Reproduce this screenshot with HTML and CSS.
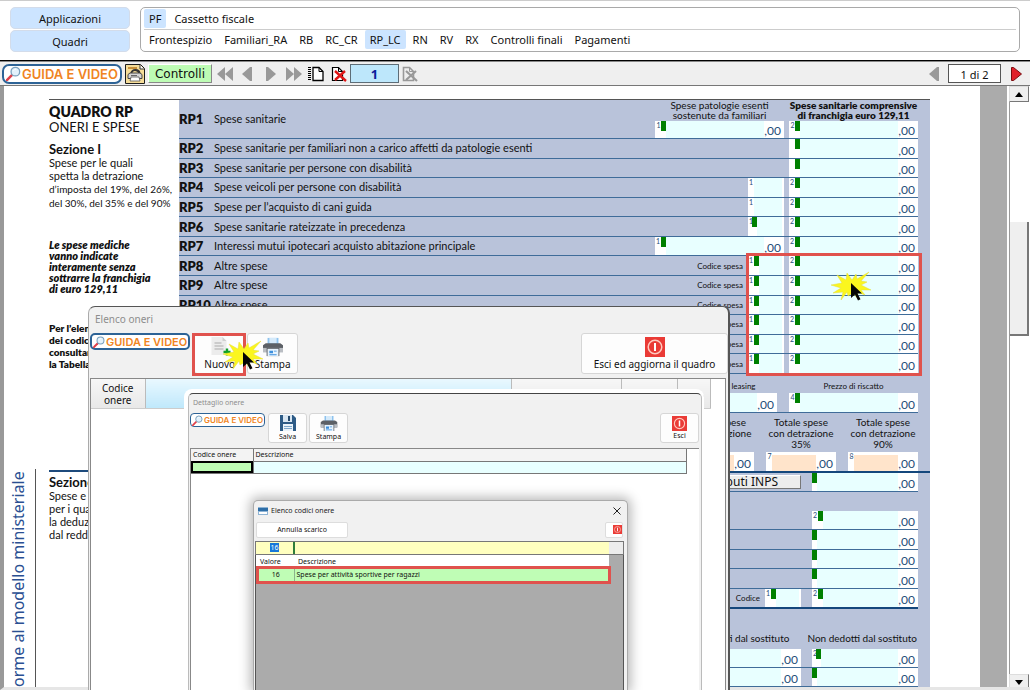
FILE: index.html
```html
<!DOCTYPE html>
<html lang="it">
<head>
<meta charset="utf-8">
<title>Quadro RP - Oneri e spese</title>
<link rel="stylesheet" href="styles.css">
</head>
<body>
<svg class="defs" aria-hidden="true">
  <symbol id="lens" viewBox="0 0 16 16"><path d="M1 15l5-5" stroke="#e0404a" stroke-width="2.6" stroke-linecap="round"/><circle cx="10" cy="6" r="4.6" fill="#e3f1fb" stroke="#7aa0bd" stroke-width="1.4"/><path d="M8 5q1-2 3-1.500" stroke="#fff" fill="none"/></symbol>
  <symbol id="printer" viewBox="0 0 24 22"><path d="M6 1h12v8H6z" fill="#8ec3ee"/><path d="M8 1h8v6H8z" fill="#d5eafa"/><path d="M1 9l3-2h16l3 2v7H1z" fill="#5c6066"/><path d="M1 12h22v5H1z" fill="#b9bdc3"/><path d="M5 12h14v9H5z" fill="#5c6066"/><path d="M6 13h12v8H6z" fill="#e6f3fd"/><path d="M8 15h4v3H8zM13 15h3v1h-3zM8 19h8v1H8z" fill="#3c8fdd"/></symbol>
  <symbol id="power" viewBox="0 0 20 20"><path d="M0 0h20v20H0z" fill="#ea3b36"/><circle cx="10" cy="10" r="6.800" fill="none" stroke="#ffc9bf" stroke-width="1.500"/><path d="M10 6v8" stroke="#fff" stroke-width="2"/></symbol>
  <symbol id="floppy" viewBox="0 0 18 18"><path d="M1 1h13l3 3v13H1z" fill="#2d5b86"/><path d="M4 1h9v7H4z" fill="#d8e6f2"/><path d="M9 2h2v5H9z" fill="#24496c"/><path d="M4 10h10v7H4z" fill="#eaf3fa"/><path d="M5 12h8v1H5zM5 14h8v1H5z" fill="#7da7cc"/></symbol>
  <symbol id="newdoc" viewBox="0 0 24 20"><path d="M4 0h11l4 4v14H4z" fill="#ececec"/><path d="M15 0l4 4h-4z" fill="#cfcfcf"/><path d="M7 6h7M7 9h9M7 12h9" stroke="#aaa"/><path d="M16 15h7M19.500 11.500v7" stroke="#11a02a" stroke-width="2.400"/></symbol>
  <symbol id="burst" viewBox="0 0 42 32"><path d="M21 9L25 3 26 8 38 1 30 10 36 11 30 14 40 19 30 19 34 24 26 21 28 29 22 22 17 25 16 21 10 29 12 21 2 22 10 17 0 14 11 12 6 4 15 9 16 2z" fill="#fbf61e" stroke="#e5dc3a" stroke-width=".5"/><path d="M20 12v15l4-3.500 3 6 2.500-1.200-3-5.800h4.500z" fill="#050505"/></symbol>
  <symbol id="sheet" viewBox="0 0 17 16"><path d="M6 1.500h6l4 4v9H6z" fill="#fff" stroke="#000" stroke-width="1.300"/><path d="M12 1.500v4h4" fill="none" stroke="#000"/><path d="M1 1.500h3M1 3.500h3M1 5.500h3M1 7.500h3M1 9.500h3M1 11.500h3M1 13.500h3" stroke="#000"/></symbol>
  <symbol id="sheetdel" viewBox="0 0 16 16"><path d="M1.500 1.500h6l4 4v9h-10z" fill="#fff" stroke="#000" stroke-width="1.200"/><path d="M7.500 1.500v4h4" fill="none" stroke="#000"/><path d="M4 5l11 10M14 5L4 14" stroke="#e01414" stroke-width="2.400"/></symbol>
  <symbol id="sheetoff" viewBox="0 0 16 16"><path d="M1.500 1.500h6l4 4v9h-10z" fill="#eee" stroke="#999" stroke-width="1.600"/><path d="M7.500 1.500v4h4" fill="none" stroke="#999"/><path d="M4 5l11 10M14 5L4 14" stroke="#999" stroke-width="2.200"/></symbol>
</svg>

<header class="top">
  <nav class="side">
    <button class="pill">Applicazioni</button>
    <button class="pill">Quadri</button>
  </nav>
  <nav class="tabs">
    <div class="tabrow"><a class="on" href="#">PF</a><a href="#">Cassetto fiscale</a></div>
    <div class="tabrow second"><a href="#">Frontespizio</a><a href="#">Familiari_RA</a><a href="#">RB</a><a href="#">RC_CR</a><a class="on" href="#">RP_LC</a><a href="#">RN</a><a href="#">RV</a><a href="#">RX</a><a href="#">Controlli finali</a><a href="#">Pagamenti</a></div>
  </nav>
</header>

<div class="toolbar">
  <a class="guide" href="#"><svg><use href="#lens"/></svg>GUIDA E VIDEO</a>
  <button class="plain" aria-label="Stampa modello"><svg width="20" height="20" viewBox="0 0 20 20"><path d="M.5.5h15l4 4v15H.5z" fill="#f6dd98" stroke="#1c1c1c"/><path d="M3 3h9v2H3z" fill="#c8913a"/><path d="M15 1v4h4" fill="#fff" stroke="#333"/><path d="M5 10q1-5 5.500-5t5 4l-2 .500q-1-2.500-3.500-2.500t-3 3z" fill="#333"/><path d="M3 10.500l2-1.500h10l2 1.500v4H3z" fill="#d5d5d5" stroke="#444"/><path d="M6 13h8l1 4H5z" fill="#fff" stroke="#555" stroke-width=".8"/><path d="M6 11.500h6" stroke="#666"/></svg></button>
  <button class="check">Controlli</button>
  <button class="plain arrows" aria-label="Primo"><svg width="16" height="14" viewBox="0 0 16 14"><path d="M8 0v14L0 7zM16 0v14L8 7z" fill="#999"/></svg></button>
  <button class="plain arrows" aria-label="Precedente"><svg width="11" height="14" viewBox="0 0 11 14"><path d="M10 0v14H8L0 7l8-7z" fill="#999"/></svg></button>
  <button class="plain arrows" aria-label="Successivo"><svg width="11" height="14" viewBox="0 0 11 14"><path d="M1 0v14h2l8-7-8-7z" fill="#999"/></svg></button>
  <button class="plain arrows" aria-label="Ultimo"><svg width="16" height="14" viewBox="0 0 16 14"><path d="M0 0v14l8-7zM8 0v14l8-7z" fill="#999"/></svg></button>
  <button class="plain" aria-label="Nuovo modulo"><svg width="17" height="16"><use href="#sheet"/></svg></button>
  <button class="plain del" aria-label="Elimina modulo"><svg width="16" height="16"><use href="#sheetdel"/></svg></button>
  <input class="module" value="1" aria-label="Modulo">
  <button class="plain" aria-label="Elimina"><svg width="16" height="16"><use href="#sheetoff"/></svg></button>
  <span class="spacer"></span>
  <button class="plain" aria-label="Pagina precedente"><svg width="11" height="14" viewBox="0 0 11 14"><path d="M10 0v14H8L0 7l8-7z" fill="#999"/></svg></button>
  <output class="pages">1 di 2</output>
  <button class="plain" aria-label="Pagina successiva"><svg width="11" height="14" viewBox="0 0 11 14"><path d="M.5.500h2L10.500 7l-8 6.500h-2z" fill="#e0202a" stroke="#7a0d10"/></svg></button>
</div>

<div class="view">
  <aside class="margin"><span class="ministry">orme al modello ministeriale</span></aside>
  <main class="sheet">
    <section class="notes">
      <h1>QUADRO RP</h1>
      <p class="big">ONERI E SPESE</p>
      <h2>Sezione I</h2>
      <p>Spese per le quali<br>spetta la detrazione<br><span class="tight">d’imposta del 19%, del 26%,<br>del 30%, del 35% e del 90%</span></p>
      <p class="em">Le spese mediche<br>vanno indicate<br>interamente senza<br>sottrarre la franchigia<br>di euro 129,11</p>
      <p class="strong">Per l’elenco<br>dei codici<br>consultare<br>la Tabella</p>
      <div class="part2">
        <h2>Sezione II</h2>
        <p>Spese e oneri<br>per i quali spetta<br>la deduzione<br>dal reddito</p>
      </div>
    </section>
    <section class="rows">
      <div class="row first">
        <b class="num">RP1</b><span class="desc">Spese sanitarie</span>
        <div class="stack"><span>Spese patologie esenti<br>sostenute da familiari</span><label class="field"><sup>1</sup><i></i><input aria-label="RP1 colonna 1"><em>,00</em></label></div>
        <div class="stack bold"><span>Spese sanitarie comprensive<br>di franchigia euro 129,11</span><label class="field"><sup>2</sup><i></i><input aria-label="RP1 colonna 2"><em>,00</em></label></div>
      </div>
      <div class="list">
        <div class="row"><b class="num">RP2</b><span class="desc">Spese sanitarie per familiari non a carico affetti da patologie esenti</span><label class="field"><sup></sup><i></i><input aria-label="RP2"><em>,00</em></label></div>
        <div class="row"><b class="num">RP3</b><span class="desc">Spese sanitarie per persone con disabilità</span><label class="field"><sup></sup><i></i><input aria-label="RP3"><em>,00</em></label></div>
        <div class="row"><b class="num">RP4</b><span class="desc">Spese veicoli per persone con disabilità</span><label class="field mini"><sup>1</sup><input aria-label="RP4 colonna 1"></label><label class="field"><sup>2</sup><i></i><input aria-label="RP4 colonna 2"><em>,00</em></label></div>
        <div class="row"><b class="num">RP5</b><span class="desc">Spese per l’acquisto di cani guida</span><label class="field mini"><sup>1</sup><input aria-label="RP5 colonna 1"></label><label class="field"><sup>2</sup><i></i><input aria-label="RP5 colonna 2"><em>,00</em></label></div>
        <div class="row"><b class="num">RP6</b><span class="desc">Spese sanitarie rateizzate in precedenza</span><label class="field mini"><sup class="near">1</sup><i></i><input aria-label="RP6 colonna 1"></label><label class="field"><sup>2</sup><i></i><input aria-label="RP6 colonna 2"><em>,00</em></label></div>
        <div class="row"><b class="num">RP7</b><span class="desc">Interessi mutui ipotecari acquisto abitazione principale</span><label class="field"><sup>1</sup><i></i><input aria-label="RP7 colonna 1"><em>,00</em></label><label class="field"><sup>2</sup><i></i><input aria-label="RP7 colonna 2"><em>,00</em></label></div>
        <div class="row"><b class="num">RP8</b><span class="desc">Altre spese</span><span class="code">Codice spesa</span><label class="field mini"><sup>1</sup><i></i><input aria-label="RP8 codice"></label><label class="field"><sup>2</sup><i></i><input aria-label="RP8 importo"><em>,00</em></label></div>
        <div class="row"><b class="num">RP9</b><span class="desc">Altre spese</span><span class="code">Codice spesa</span><label class="field mini"><sup>1</sup><i></i><input aria-label="RP9 codice"></label><label class="field"><sup>2</sup><i></i><input aria-label="RP9 importo"><em>,00</em></label></div>
        <div class="row"><b class="num">RP10</b><span class="desc">Altre spese</span><span class="code">Codice spesa</span><label class="field mini"><sup>1</sup><i></i><input aria-label="RP10 codice"></label><label class="field"><sup>2</sup><i></i><input aria-label="RP10 importo"><em>,00</em></label></div>
        <div class="row"><span class="desc"></span><span class="code">Codice spesa</span><label class="field mini"><sup>1</sup><i></i><input aria-label="RP11 codice"></label><label class="field"><sup>2</sup><i></i><input aria-label="RP11 importo"><em>,00</em></label></div>
        <div class="row"><span class="desc"></span><span class="code">Codice spesa</span><label class="field mini"><sup>1</sup><i></i><input aria-label="RP12 codice"></label><label class="field"><sup>2</sup><i></i><input aria-label="RP12 importo"><em>,00</em></label></div>
        <div class="row"><span class="desc"></span><span class="code">Codice spesa</span><label class="field mini"><sup>1</sup><i></i><input aria-label="RP13 codice"></label><label class="field"><sup>2</sup><i></i><input aria-label="RP13 importo"><em>,00</em></label></div>
      </div>
      <div class="row lease">
        <div class="stack wide-a"><span>leasing</span><label class="field"><input aria-label="Leasing"><em>,00</em></label></div>
        <div class="stack"><span>Prezzo di riscatto</span><label class="field"><sup>4</sup><i></i><input aria-label="Prezzo di riscatto"><em>,00</em></label></div>
      </div>
      <div class="row totals">
        <div class="stack"><span>Totale spese<br>con detrazione</span><label class="field peach"><input aria-label="Totale"><em>,00</em></label></div>
        <div class="stack"><span>Totale spese<br>con detrazione<br>35%</span><label class="field peach"><sup>7</sup><input aria-label="Totale 35%"><em>,00</em></label></div>
        <div class="stack"><span>Totale spese<br>con detrazione<br>90%</span><label class="field peach"><sup>8</sup><input aria-label="Totale 90%"><em>,00</em></label></div>
      </div>
      <div class="row second"><button class="inps">Contributi INPS</button><label class="field mid"><i></i><input aria-label="Contributi INPS importo"><em>,00</em></label></div>
      <div class="list lower">
        <div class="row"><label class="field mid"><sup>2</sup><i></i><input aria-label="RP22"><em>,00</em></label></div>
        <div class="row"><label class="field mid"><i></i><input aria-label="RP23"><em>,00</em></label></div>
        <div class="row"><label class="field mid"><i></i><input aria-label="RP24"><em>,00</em></label></div>
        <div class="row"><label class="field mid"><i></i><input aria-label="RP25"><em>,00</em></label></div>
        <div class="row thick"><span class="code">Codice</span><label class="field mini"><sup>1</sup><i></i><input aria-label="RP26 codice"></label><label class="field mid"><sup>2</sup><i></i><input aria-label="RP26 importo"><em>,00</em></label></div>
      </div>
      <div class="heads"><span>Dedotti dal sostituto</span><span>Non dedotti dal sostituto</span></div>
      <div class="row pair"><label class="field mid"><input aria-label="Dedotti 1"><em>,00</em></label><label class="field mid"><sup class="near">2</sup><i></i><input aria-label="Non dedotti 1"><em>,00</em></label></div>
      <div class="row pair"><label class="field mid"><input aria-label="Dedotti 2"><em>,00</em></label><label class="field mid"><i></i><input aria-label="Non dedotti 2"><em>,00</em></label></div>
    </section>
  </main>
  <div class="desk"></div>
  <div class="scroll">
    <button aria-label="Su"><svg width="8" height="5" viewBox="0 0 8 5"><path d="M4 0l4 5H0z"/></svg></button>
    <div class="track"><div class="thumb"></div></div>
    <button aria-label="Giù"><svg width="8" height="5" viewBox="0 0 8 5"><path d="M0 0h8L4 5z"/></svg></button>
  </div>
</div>

<div class="mark fields-mark"></div>
<svg class="burst at-fields"><use href="#burst"/></svg>

<section class="win list-win">
  <h3>Elenco oneri</h3>
  <div class="bar">
    <a class="guide small" href="#"><svg><use href="#lens"/></svg>GUIDA E VIDEO</a>
    <button class="tool"><svg width="25" height="20"><use href="#newdoc"/></svg>Nuovo</button>
    <button class="tool"><svg width="24" height="20"><use href="#printer"/></svg>Stampa</button>
    <span class="spacer"></span>
    <button class="tool exit"><svg width="20" height="20"><use href="#power"/></svg>Esci ed aggiorna il quadro</button>
  </div>
  <div class="grid">
    <table><tr><th class="c1">Codice<br>onere</th><th class="c2"></th><th class="c3"></th><th class="c4"></th><th class="c5"></th></tr></table>
  </div>
  <div class="mark new-mark"></div>
  <svg class="burst at-new"><use href="#burst"/></svg>
</section>

<section class="win detail-win">
  <h3>Dettaglio onere</h3>
  <div class="bar">
    <a class="guide tiny" href="#"><svg><use href="#lens"/></svg>GUIDA E VIDEO</a>
    <button class="tool"><svg width="18" height="18"><use href="#floppy"/></svg>Salva</button>
    <button class="tool"><svg width="18" height="17"><use href="#printer"/></svg>Stampa</button>
    <span class="spacer"></span>
    <button class="tool exit"><svg width="15" height="15"><use href="#power"/></svg>Esci</button>
  </div>
  <div class="grid">
    <table><tr><th class="d1">Codice onere</th><th>Descrizione</th></tr><tr><td class="cur"></td><td class="cy"></td></tr></table>
  </div>
</section>

<section class="win codes-win">
  <div class="title"><svg width="10" height="8" viewBox="0 0 10 8"><path d="M0 0h10v8H0z" fill="#8fb4d4"/><path d="M0 1h10v3H0z" fill="#2d6ea8"/><path d="M1 5h8v2H1z" fill="#fff"/></svg><h3>Elenco codici onere</h3><button class="plain" aria-label="Chiudi"><svg width="8" height="8" viewBox="0 0 8 8"><path d="M.5.500l7 7M7.500.5l-7 7" stroke="#222"/></svg></button></div>
  <div class="actions"><button class="undo">Annulla scarico</button><button class="quit" aria-label="Esci"><svg width="9" height="9"><use href="#power"/></svg></button></div>
  <div class="filter"><div class="key"><span>16</span></div><input aria-label="Descrizione da cercare"></div>
  <div class="results">
    <table><tr><th class="k">Valore</th><th>Descrizione</th></tr><tr class="hit"><td class="k">16</td><td>Spese per attività sportive per ragazzi</td></tr></table>
    <div class="mark hit-mark"></div>
  </div>
</section>
</body>
</html>
```
FILE: styles.css
```css
* { box-sizing: border-box; }
html, body { height: 100%; }
body { margin: 0; overflow: hidden; display: flex; flex-direction: column; position: relative; background: #fff; color: #111; font-family: "Noto Sans", "Open Sans", sans-serif; font-size: 11px; }
h1, h2, h3, p { margin: 0; }
button, input { font: inherit; color: inherit; padding: 0; margin: 0; }
a { color: inherit; text-decoration: none; }
svg { display: block; flex: none; }
.defs { position: absolute; width: 0; height: 0; }
.spacer { flex: 1; }

/* navigation */
.top { display: flex; gap: 10px; padding: 6px 10px 8px; height: 60px; flex: none; border-top: 1px solid #ccc; }
.side { width: 120px; display: flex; flex-direction: column; gap: 1px; }
.pill { flex: 1; border: 1px solid #d3dcea; border-radius: 5px; background: #cce4ff; }
.tabs { flex: 1; border: 1px solid #a9a9a9; border-radius: 5px; display: flex; flex-direction: column; padding: 0 3px; }
.tabrow { flex: 1; display: flex; align-items: center; gap: 3px; }
.tabrow.second { border-top: 1px solid #ccc; gap: 2px; padding-bottom: 1px; }
.tabrow a { padding: 0 5px; line-height: 19px; border-radius: 2px; }
.tabrow .on { background: #cce4ff; }

/* toolbar */
.toolbar { flex: none; display: flex; align-items: center; gap: 3px; height: 26px; padding: 1px 8px 0 2px; background: #efefef; border-top: 1px solid #000; border-bottom: 1px solid #777; box-shadow: inset 0 1px #888; }
.guide { display: flex; align-items: center; gap: 1px; height: 20px; padding: 0 2px; border: 2px solid #2d6396; border-radius: 7px; background: #fff; color: #f08422; font: 600 13px Inter, sans-serif; white-space: nowrap; }
.guide svg { width: 15px; height: 15px; }
.plain { border: 0; background: none; display: flex; align-items: center; justify-content: center; }
.check { width: 64px; height: 19px; border: 1px solid #888; border-top-color: #fff; border-left-color: #fff; background: #bdfcb4; font: 12px "DejaVu Sans", sans-serif; }
.arrows { width: 20px; }
.del { margin-left: 4px; }
.module { width: 49px; height: 19px; border: 1px solid #5d6d77; background: #bde7fb; color: #0a1a9a; font: bold 13px "Noto Sans", sans-serif; text-align: center; }
.pages { width: 53px; height: 19px; margin: 0 7px 0 5px; border: 1px solid #555; background: #fff; text-align: center; line-height: 19px; }

/* document */
.view { flex: 1; min-height: 0; display: flex; overflow: hidden; border-left: 4px solid #999; border-bottom: 3px solid #e6e6e6; }
.margin { width: 45px; flex: none; padding-top: 383px; }
.ministry { display: block; width: 32px; height: 231px; border-left: 1px solid #555; writing-mode: vertical-rl; transform: rotate(180deg); color: #2a4f92; font-size: 16px; line-height: 28px; white-space: nowrap; text-align: right; padding-bottom: 2px; }
.sheet { flex: 1; display: flex; align-items: flex-start; margin: 13px 50px 0 0; border-top: 1px solid #555; font-family: Lato, sans-serif; }
.notes { width: 130px; flex: none; font-size: 11px; line-height: 13px; white-space: nowrap; padding-top: 3px; }
.notes h1 { font-size: 14px; line-height: 17px; font-weight: 800; }
.notes h2 { font-size: 13px; line-height: 13px; margin-top: 9px; }
.notes .big { font-size: 13px; line-height: 14px; }
.notes .tight { font-size: 10px; }
.notes .em { margin-top: 29px; font-weight: 800; font-style: italic; font-size: 11px; line-height: 11px; }
.notes .strong { margin-top: 28px; font-weight: 800; font-size: 10px; line-height: 12px; }
.notes .part2 { margin-top: 100px; border-top: 2px solid #1d4a7c; }
.notes .part2 h2 { margin-top: 4px; }
.rows { flex: 1; background: #b9c3da; }
.row { display: flex; align-items: stretch; gap: 5px; margin-right: 12px; border-bottom: 1px solid #3f6c99; }
.row.first { height: 39px; }
.list { height: 235px; display: flex; flex-direction: column; }
.list .row { flex: 1; min-height: 0; }
.num { width: 30px; align-self: center; font-size: 13px; font-weight: 800; line-height: 16px; white-space: nowrap; }
.desc { flex: 1; align-self: center; font-size: 11px; line-height: 16px; }
.code { align-self: center; font-size: 8px; line-height: 12px; }
.field { width: 129px; display: flex; align-items: stretch; background: #fff; font-weight: 400; }
.field.mini { width: 36px; }
.field.mid { width: 106px; }
.field sup { width: 6px; font-size: 7px; line-height: 8px; padding-left: 1px; color: #1f4e79; vertical-align: baseline; }
.field sup.near { width: 4px; }
.field i { width: 5px; height: 10px; background: #008000; flex: none; }
.field input { flex: 1; min-width: 0; width: 0; border: 0; background: #e8ffff; }
.field em { width: 20px; align-self: flex-end; font-style: normal; font-size: 12px; line-height: 14px; color: #1f4e79; text-align: right; padding-right: 3px; }
.field.mini input { margin-right: 2px; }
.stack { display: flex; flex-direction: column; justify-content: flex-end; width: 129px; text-align: center; font-size: 10px; line-height: 10px; }
.stack > span { white-space: nowrap; }
.first .stack > span { margin-bottom: 1px; }
.stack .field { height: 19px; width: 100%; }
.stack.bold { font-weight: 800; align-items: center; }
.row.lease { height: 39px; justify-content: flex-end; gap: 12px; }
.lease .stack > span { margin-bottom: 1px; line-height: 12px; }
.lease .stack { font-size: 8px; }
.lease .wide-a > span { padding-left: 62px; }
.row.totals { height: 60px; justify-content: flex-end; gap: 12px; margin-right: 0; padding-right: 12px; border-bottom: 2px solid #14477c; }
.totals .stack { width: 70px; align-items: center; justify-content: space-between; padding-top: 4px; line-height: 11px; }
.peach input { margin-top: 3px; background: #ffe4cb; }
.row.second { height: 19px; justify-content: flex-end; gap: 11px; }
.inps { width: 200px; margin: 2px 0; padding-right: 22px; border: 1px solid #777; border-top-color: #fff; border-left-color: #fff; background: #ededed; text-align: right; font-size: 12px; line-height: 12px; font-family: "Noto Sans", sans-serif; }
.list.lower { height: 98px; margin-top: 19px; }
.list.lower .row { justify-content: flex-end; }
.lower .mini { margin-right: 6px; }
.row.thick { border-bottom: 2px solid #14477c; }
.heads { display: flex; justify-content: flex-end; gap: 18px; padding: 22px 13px 0 0; height: 40px; font-size: 10px; line-height: 15px; }
.row.pair { height: 19px; justify-content: flex-end; gap: 11px; }
.desk { width: 27px; background: #ababab; flex: none; }
.scroll { width: 23px; flex: none; padding: 0 1px 0 2px; display: flex; flex-direction: column; margin-bottom: -3px; }
.scroll button { height: 16px; flex: none; display: flex; align-items: center; justify-content: center; border: 1px solid #777; border-top-color: #ddd; border-left-color: #ddd; background: #efefef; }
.track { flex: 1; border-left: 1px solid #999; padding-top: 120px; }
.thumb { height: 114px; border-right: 2px solid #777; border-bottom: 2px solid #777; background: #efefef; }

/* highlights */
.mark { position: absolute; border: 3px solid #e0524d; pointer-events: none; }
.fields-mark { left: 746px; top: 253px; width: 176px; height: 123px; }
.new-mark { left: 103px; top: 26px; width: 54px; height: 43px; }
.hit-mark { left: 0; top: 11px; width: 355px; height: 18px; }
.burst { position: absolute; width: 42px; height: 32px; }
.at-fields { left: 831px; top: 271px; }
.at-new { left: 134px; top: 33px; }

/* windows */
.win { position: absolute; bottom: 0; display: flex; flex-direction: column; background: #f1f1f1; }
.win h3 { font-weight: 400; color: #8d8d8d; }
.bar { display: flex; align-items: flex-start; }
.tool { display: flex; flex-direction: column; align-items: center; justify-content: center; border: 1px solid #d6d6d6; border-radius: 3px; background: #fdfdfd; white-space: nowrap; }
.grid { flex: 1; border: 1px solid #888; border-bottom: 0; background: #fff; }
.win table { border-collapse: collapse; table-layout: fixed; }
.win th { font-weight: 400; text-align: left; padding: 0; }
.win td { padding: 0; }
.list-win { left: 88px; top: 306px; width: 642px; border: 1px solid #aaa; border-top-color: #555; border-right: 2px solid #555; border-bottom: 0; border-radius: 7px 7px 0 0; padding: 4px 0 0 1px; }
.list-win h3 { font-size: 10px; line-height: 16px; padding-left: 5px; }
.list-win .bar { height: 51px; padding-top: 6px; gap: 2px; }
.guide.small { height: 17px; font-size: 11px; padding: 0 1px; margin-right: 2px; border-radius: 5px; }
.guide.small svg { width: 12px; height: 12px; }
.list-win .tool { width: 51px; height: 41px; font-size: 10px; line-height: 13px; gap: 1px; }
.list-win .tool.exit { width: 147px; }
.list-win .grid { margin-right: 2px; }
.list-win table { width: 620px; height: 30px; }
.list-win th { border-right: 1px solid #bbb; border-bottom: 1px solid #ccc; background: linear-gradient(#f7f7f7, #e8e8e8); }
.list-win .c1 { width: 54px; text-align: center; font-size: 10px; line-height: 12px; }
.list-win .c2 { width: 366px; background: linear-gradient(#e9f8ff, #bfe8fb); }
.list-win .c3 { width: 110px; }
.list-win .c4 { width: 56px; }
.detail-win { left: 188px; top: 393px; width: 514px; border: 1px solid #bbb; border-top-color: #444; border-bottom: 0; border-radius: 5px 5px 0 0; box-shadow: -1px -1px 0 3px #fff, 2px 0 #888; padding: 4px 2px 0 1px; font-size: 7px; clip-path: inset(-4px -2px 0 -4px); }
.detail-win h3 { font-size: 7px; line-height: 10px; padding-left: 3px; }
.detail-win .bar { height: 40px; padding-top: 5px; gap: 2px; }
.guide.tiny { height: 14px; font-size: 8px; padding: 0 1px; margin-right: 1px; border-radius: 4px; border-width: 1px; }
.guide.tiny svg { width: 11px; height: 11px; }
.detail-win .tool { width: 39px; height: 30px; line-height: 10px; }
.detail-win .grid { border-right: 0; }
.detail-win table { width: 496px; }
.detail-win th, .detail-win td { border: 1px solid #777; border-top: 0; border-left: 0; height: 12px; line-height: 11px; padding-left: 2px; background: #f3f3f3; }
.detail-win .d1 { width: 62px; }
.detail-win .cur { background: #bffdb5; outline: 2px solid #000; outline-offset: -2px; }
.detail-win .cy { background: #e8ffff; }
.codes-win { left: 253px; top: 500px; width: 375px; border: 1px solid #aaa; border-bottom: 0; border-radius: 5px 5px 0 0; padding: 0 3px 0 1px; font-size: 7px; box-shadow: 0 0 12px 3px rgba(0,0,0,.28); }
.codes-win .title { display: flex; align-items: center; gap: 3px; height: 19px; padding: 0 3px; }
.codes-win .title h3 { flex: 1; color: #222; font-size: 7px; }
.actions { display: flex; justify-content: space-between; align-items: center; height: 21px; padding-bottom: 2px; }
.undo { width: 92px; height: 16px; margin-left: 1px; border: 1px solid #ddd; border-radius: 2px; background: #fff; }
.quit { width: 18px; height: 16px; margin-right: 1px; border: 1px solid #ddd; border-radius: 2px; background: #fff; display: flex; align-items: center; justify-content: flex-end; }
.filter { display: flex; height: 14px; border: 1px solid #777; background: #ececec; }
.filter .key { width: 39px; background: #ffffbf; border-right: 2px solid #2f7d3a; text-align: center; line-height: 12px; }
.filter span { background: #1677d8; color: #fff; }
.filter input { width: 314px; border: 0; background: #ffffbf; }
.results { flex: 1; position: relative; background: #ababab; border: 1px solid #555; border-top: 0; border-bottom: 0; }
.results table { width: 353px; background: #fff; }
.results th, .results td { height: 13px; line-height: 12px; padding-left: 4px; }
.results td { padding-left: 2px; }
.results .k { width: 38px; }
.results td.k { border-right: 1px solid #8bb58b; text-align: center; }
.results .hit { background: #bffdb5; }
```
